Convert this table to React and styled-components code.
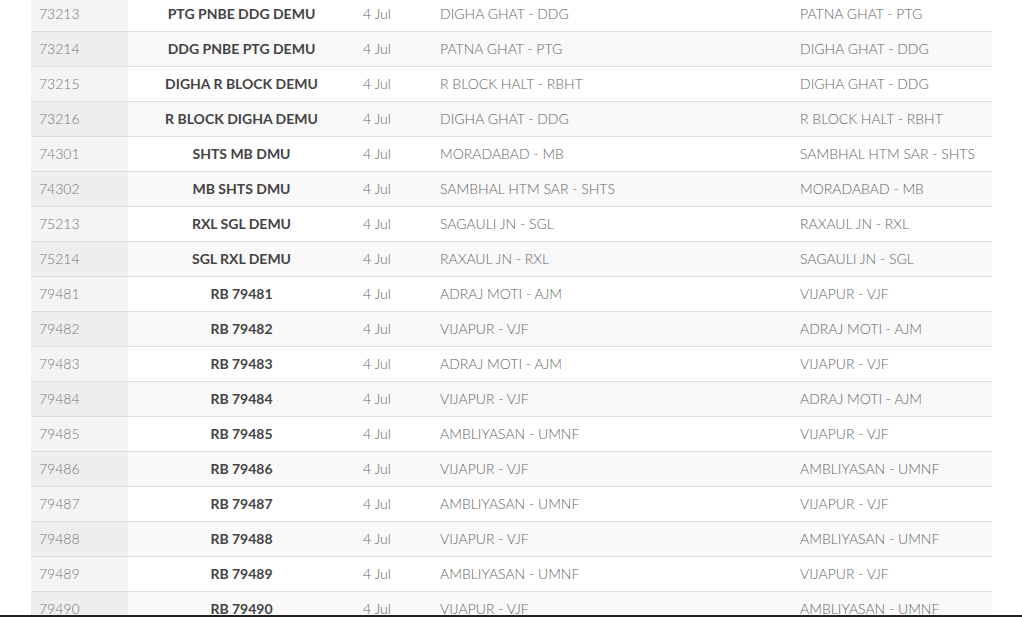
import styled, { createGlobalStyle } from 'styled-components';

const GlobalStyle = createGlobalStyle`
  html, body {
    margin: 0;
    padding: 0;
    background: #fff;
    overflow: hidden;
  }
  body {
    font-family: Lato, "Open Sans", sans-serif;
  }
`;

const trains = [
  ['73213', 'PTG PNBE DDG DEMU', 'DIGHA GHAT - DDG', 'PATNA GHAT - PTG'],
  ['73214', 'DDG PNBE PTG DEMU', 'PATNA GHAT - PTG', 'DIGHA GHAT - DDG'],
  ['73215', 'DIGHA R BLOCK DEMU', 'R BLOCK HALT - RBHT', 'DIGHA GHAT - DDG'],
  ['73216', 'R BLOCK DIGHA DEMU', 'DIGHA GHAT - DDG', 'R BLOCK HALT - RBHT'],
  ['74301', 'SHTS MB DMU', 'MORADABAD - MB', 'SAMBHAL HTM SAR - SHTS'],
  ['74302', 'MB SHTS DMU', 'SAMBHAL HTM SAR - SHTS', 'MORADABAD - MB'],
  ['75213', 'RXL SGL DEMU', 'SAGAULI JN - SGL', 'RAXAUL JN - RXL'],
  ['75214', 'SGL RXL DEMU', 'RAXAUL JN - RXL', 'SAGAULI JN - SGL'],
  ['79481', 'RB 79481', 'ADRAJ MOTI - AJM', 'VIJAPUR - VJF'],
  ['79482', 'RB 79482', 'VIJAPUR - VJF', 'ADRAJ MOTI - AJM'],
  ['79483', 'RB 79483', 'ADRAJ MOTI - AJM', 'VIJAPUR - VJF'],
  ['79484', 'RB 79484', 'VIJAPUR - VJF', 'ADRAJ MOTI - AJM'],
  ['79485', 'RB 79485', 'AMBLIYASAN - UMNF', 'VIJAPUR - VJF'],
  ['79486', 'RB 79486', 'VIJAPUR - VJF', 'AMBLIYASAN - UMNF'],
  ['79487', 'RB 79487', 'AMBLIYASAN - UMNF', 'VIJAPUR - VJF'],
  ['79488', 'RB 79488', 'VIJAPUR - VJF', 'AMBLIYASAN - UMNF'],
  ['79489', 'RB 79489', 'AMBLIYASAN - UMNF', 'VIJAPUR - VJF'],
  ['79490', 'RB 79490', 'VIJAPUR - VJF', 'AMBLIYASAN - UMNF'],
];

const App = () => {
  return (
    <>
      <GlobalStyle />
      <Page>
        <TrainList>
          {trains.map(([no, name, from, to], i) => (
            <Row key={no} $striped={i % 2 === 1}>
              <NumberCell>{no}</NumberCell>
              <NameCell>{name}</NameCell>
              <Cell>4 Jul</Cell>
              <Cell>{from}</Cell>
              <Cell>{to}</Cell>
            </Row>
          ))}
        </TrainList>
      </Page>
      <BottomEdge />
    </>
  );
};

const Page = styled.div`
  padding-left: 31px;
  margin-top: -3px;
`;

const TrainList = styled.div`
  width: 961px;
  display: flex;
  flex-direction: column;
  font-size: 14px;
`;

const Row = styled.div`
  display: grid;
  grid-template-columns: 97px 227px 77px 360px 200px;
  height: 35px;
  box-sizing: border-box;
  background: ${({ $striped }) => ($striped ? '#f9f9f9' : '#fff')};
  border-bottom: 1px solid #dedede;
`;

const Cell = styled.div`
  display: flex;
  align-items: center;
  padding: 0 8px 2px;
  font-weight: 300;
  color: #666;
  white-space: nowrap;
`;

const NumberCell = styled(Cell)`
  background: rgba(0, 0, 0, 0.045);
  color: #777;
`;

const NameCell = styled(Cell)`
  justify-content: center;
  font-weight: 700;
  color: #444;
`;

const BottomEdge = styled.div`
  position: fixed;
  left: 0;
  right: 0;
  bottom: 0;
  height: 2px;
  background: #222;
`;

export default App;
